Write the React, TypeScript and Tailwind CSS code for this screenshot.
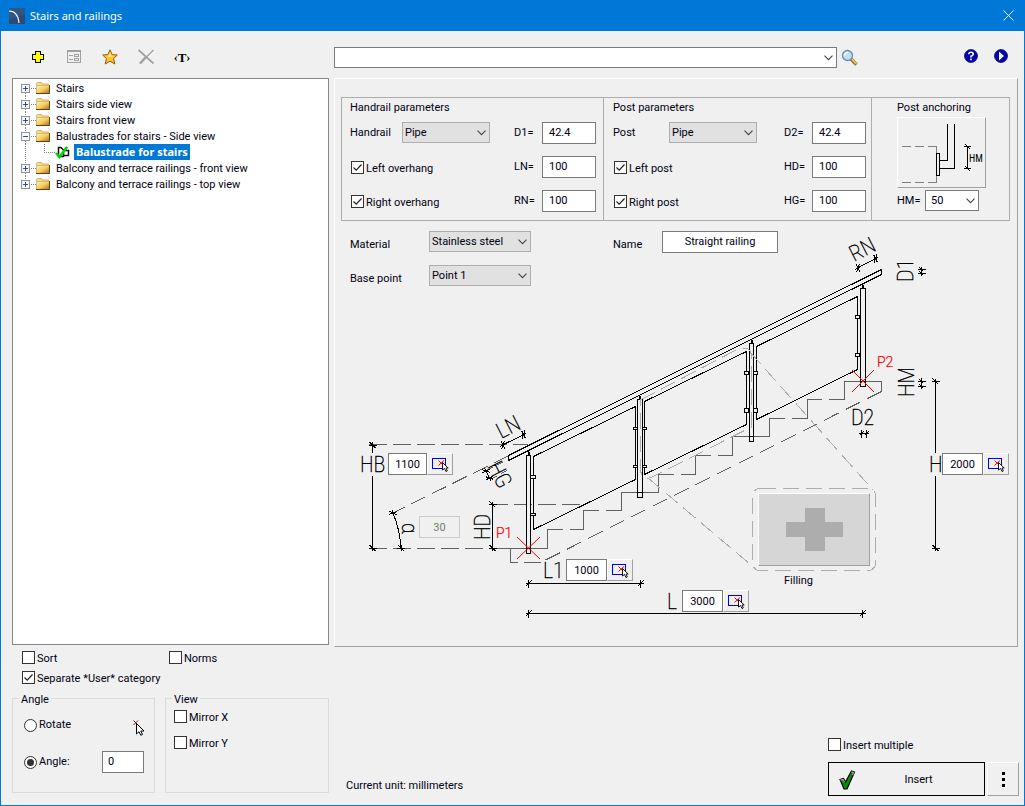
import React from "react";

const cx = (...c: (string | false | undefined)[]) => c.filter(Boolean).join(" ");

function Check({ label, checked, className }: { label: string; checked?: boolean; className?: string }) {
  return (
    <label className={cx("flex items-center gap-0.5", className)}>
      <span className="relative block size-[13px] shrink-0">
        <input
          type="checkbox"
          defaultChecked={checked}
          className="peer block size-[13px] appearance-none border border-[#333333] bg-white"
        />
        <svg
          viewBox="0 0 13 13"
          className="pointer-events-none absolute inset-0 hidden size-[13px] peer-checked:block"
          fill="none"
          stroke="#222"
        >
          <path d="M2.5 6.5 L5.2 9.2 L10.5 3.5" strokeWidth="1.2" />
        </svg>
      </span>
      <span className="pt-0.5 whitespace-nowrap">{label}</span>
    </label>
  );
}

function Picker({ label, options, className, white }: { label: string; options: string[]; className?: string; white?: boolean }) {
  return (
    <span className={cx("relative block h-[21px] shrink-0", className)}>
      <select
        aria-label={label}
        className={cx(
          "block size-full appearance-none border pr-4 text-[11px] leading-none outline-none",
          white ? "border-[#7a7a7a] bg-white pl-[5px]" : "border-[#adadad] bg-[#e1e1e1] pl-[2px]",
        )}
      >
        {options.map((o) => (
          <option key={o}>{o}</option>
        ))}
      </select>
      <svg viewBox="0 0 9 6" className="pointer-events-none absolute top-2 right-1 h-[6px] w-[9px]" fill="none" stroke="#444">
        <path d="M0.5 0.7 L4.5 4.7 L8.5 0.7" strokeWidth="1.1" />
      </svg>
    </span>
  );
}

const box = "block h-[22px] border border-[#7a7a7a] bg-white text-[11px] leading-none outline-none";

function Param({ name, value }: { name: string; value: string }) {
  return (
    <label className="flex items-center">
      <span className="w-7">{name}=</span>
      <input className={cx(box, "w-[54px] px-[6px] pb-0.5")} defaultValue={value} />
    </label>
  );
}

function PickIcon() {
  return (
    <svg viewBox="0 0 18 16" className="h-4 w-[18px]" fill="none">
      <rect x="1.5" y="2.5" width="13" height="10" stroke="#0000f0" shapeRendering="crispEdges" />
      <path d="M7.500 4.500 L12.500 9.500 M13 4.500 L7.500 9.500" stroke="#f00" />
      <path d="M11.500 6.500 V14 L13.500 12.500 L15 15.500 L16.300 15 L15 12 H17.200 Z" fill="#fff" stroke="#000" strokeWidth="0.9" />
    </svg>
  );
}

function Dimension({ label, value, className, narrow }: { label: string; value: string; className: string; narrow?: boolean }) {
  return (
    <div className={cx("absolute flex", className)}>
      <input aria-label={label} className={cx(box, "px-0 text-center", narrow ? "w-[39px]" : "w-[41px]")} defaultValue={value} />
      <button
        aria-label={`Pick ${label}`}
        className="flex h-[22px] w-[26px] items-center justify-center border border-t-white border-r-[#a0a0a0] border-b-[#a0a0a0] border-l-white bg-[#f0f0f0]"
      >
        <PickIcon />
      </button>
    </div>
  );
}

function Folder() {
  return (
    <svg viewBox="0 0 16 14" className="h-[14px] w-4 shrink-0">
      <defs>
        <linearGradient id="folder" x1="0" y1="0" x2="1" y2="1">
          <stop offset="0" stopColor="#fff3c0" />
          <stop offset="0.5" stopColor="#f4cc62" />
          <stop offset="1" stopColor="#b06c08" />
        </linearGradient>
      </defs>
      <path d="M1.500 12 V2.500 L2.500 1.500 H6.500 L7.500 3 H13.500 V12 Z" fill="#f3dc96" stroke="#c9a44c" strokeWidth="0.8" />
      <rect x="1.500" y="4.500" width="13" height="8" fill="url(#folder)" />
      <path d="M1.500 12.500 V4.500 H14.500" fill="none" stroke="#e0bd62" />
      <path d="M14.500 4 V12.500 H1" fill="none" stroke="#5a4312" />
    </svg>
  );
}

function Expander({ open, first, last }: { open?: boolean; first?: boolean; last?: boolean }) {
  return (
    <svg viewBox="0 0 20 16" className="h-4 w-5 shrink-0" fill="none" shapeRendering="crispEdges">
      {!first && <path d="M4.500 0 V4" stroke="#888" strokeDasharray="1 1" />}
      {!last && <path d="M4.500 13 V16" stroke="#888" strokeDasharray="1 1" />}
      <path d="M10 8.500 H15" stroke="#888" strokeDasharray="1 1" />
      <rect x="0.500" y="4.500" width="8" height="8" fill="#fafafa" stroke="#919191" />
      <path d={open ? "M2 8.500 H7" : "M2 8.500 H7 M4.500 6 V11"} stroke="#2b4fa0" />
    </svg>
  );
}

function TreeRow({ label, open, first, last }: { label: string; open?: boolean; first?: boolean; last?: boolean }) {
  return (
    <button className="flex h-4 items-center text-left">
      <Expander open={open} first={first} last={last} />
      <span className="-ml-[6px] flex items-center gap-[5px]">
        <Folder />
        <span className="pt-0.5 whitespace-nowrap">{label}</span>
      </span>
    </button>
  );
}

function Tree() {
  return (
    <div className="flex-1 border border-[#828790] bg-white pt-[1px] pl-2">
      <TreeRow label="Stairs" first />
      <TreeRow label="Stairs side view" />
      <TreeRow label="Stairs front view" />
      <TreeRow label="Balustrades for stairs - Side view" open />
      <button className="flex h-4 items-center text-left">
        <svg viewBox="0 0 50 16" className="h-4 w-[50px] shrink-0" fill="none">
          <path d="M4.500 0 V16 M23.500 0 V8.500 H34" stroke="#888" strokeDasharray="1 1" shapeRendering="crispEdges" />
          <path d="M37.500 3.500 H40 L42.500 6 V12.500 H37.500 Z M42.500 6.500 H47.500 V11.500 H42.500 M44 6 L46 3" stroke="#111" fill="#fff" strokeWidth="1.500" />
          <path d="M35 9 L38.500 13 L46 3" stroke="#00d800" strokeWidth="2.500" />
        </svg>
        <span className="ml-[3px] h-4 bg-[#0078d7] px-0.5 font-['Noto_Sans',sans-serif] text-[11px] leading-4 font-bold whitespace-nowrap text-white">
          Balustrade for stairs
        </span>
      </button>
      <TreeRow label="Balcony and terrace railings - front view" />
      <TreeRow label="Balcony and terrace railings - top view" last />
    </div>
  );
}

function Toolbar() {
  const btn = "flex size-9 items-center justify-center";
  return (
    <div className="flex h-[47px] items-center pt-[5px] pl-2">
      <button aria-label="Add" className={btn}>
        <svg viewBox="0 0 16 16" className="size-4" shapeRendering="crispEdges">
          <path d="M5.500 2.500 H10.500 V5.500 H13.500 V10.500 H10.500 V13.500 H5.500 V10.500 H2.500 V5.500 H5.500 Z" fill="#ffff00" stroke="#000" />
        </svg>
      </button>
      <button aria-label="Properties" className={btn}>
        <svg viewBox="0 0 16 16" className="size-4" fill="none" stroke="#a0a0a0" shapeRendering="crispEdges">
          <path d="M1.500 2 V14 M14.500 2 V14 M1 13.500 H15" />
          <path d="M1 2 H15" strokeWidth="2" />
          <path d="M3 6.500 H7 M3 10.500 H7" />
          <rect x="8.500" y="5.500" width="4" height="2" />
          <rect x="8.500" y="9.500" width="4" height="2" />
        </svg>
      </button>
      <button aria-label="Favourite" className={btn}>
        <svg viewBox="0 0 16 16" className="size-4">
          <path
            d="M8 0.800 L10.200 5.600 L15.300 6 L11.600 9.600 L12.800 15 L8 12.200 L3.200 15 L4.400 9.600 L0.700 6 L5.800 5.600 Z"
            fill="#ffc02a"
            stroke="#8f5f14"
            strokeLinejoin="round"
          />
          <path d="M8 3 L9 6.500 L12 7 L8 8.500 L4.500 7 L7 6.500 Z" fill="#ffe68a" />
        </svg>
      </button>
      <button aria-label="Delete" className={btn}>
        <svg viewBox="0 0 16 16" className="size-4" fill="none">
          <path d="M1.500 2 L16 15 M16 3 L9 9.500" stroke="#fff" />
          <g stroke="#a0a0a0">
            <path d="M0.500 1 L15.500 14.500" strokeWidth="1.700" />
            <path d="M15.500 1 L2 14.500" strokeWidth="1.200" />
            <path d="M7.500 8.500 L2 14.500" strokeWidth="2.500" />
          </g>
        </svg>
      </button>
      <button aria-label="Text" className={cx(btn, "font-['Liberation_Serif',serif] text-[13px] leading-none font-bold text-black")}>
        <span className="text-[12px]">‹</span>
        <span>T</span>
        <span className="text-[12px]">›</span>
      </button>
    </div>
  );
}

function Tick({ x, y, a = 0 }: { x: number; y: number; a?: number }) {
  return <path d="M0 -4 V4 M-3 3 L3 -3 M-3 0 H3" transform={`translate(${x} ${y}) rotate(${a})`} />;
}

function SmallTick({ x, y, a = 0 }: { x: number; y: number; a?: number }) {
  return <path d="M0 -4 V4 M-2 2 L2 -2" transform={`translate(${x} ${y}) rotate(${a})`} />;
}

const stairs = [
  "M493 548.5 H547.5 V529.5 H563 M570 529.5 H583.5 V510.5 H599 M606 510.5 H621.5 V492.5 H658.5 V474.5 H674 M681 474.5 H695.5",
  "V455.5 H711 M718 455.5 H732.5 V436.5 H769.5 V418.5 H785 M792 418.5 H807.5 V399.5 H822 M829 399.5 H844.5 V381.5 H881.5 V391.5",
  "M510.5 548.5 V562.5 H518 M524 562.5 H540.5",
].join(" ");

const clamps: [number, number, number, number][] = [
  [530.5, 475.5, 5, 3], [530.5, 513.5, 5, 2],
  [633.5, 427.5, 4, 2], [633.5, 465.5, 4, 2],
  [642.5, 427.5, 4, 2], [642.5, 465.5, 4, 2],
  [744.5, 371.5, 4, 3], [744.5, 408.5, 4, 4],
  [753.5, 371.5, 4, 3], [753.5, 408.5, 4, 4],
  [855.5, 315.5, 4, 3], [855.5, 353.5, 4, 3],
];

const posts: [number, number, number, number][] = [
  [526.5, 455.5, 548.5, 4],
  [637.5, 399.5, 492.5, 5],
  [749.5, 343.5, 436.5, 4],
  [860.5, 288.5, 381.5, 5],
];

function Drawing() {
  return (
    <svg viewBox="335 221 682 424" className="absolute top-0 left-0 h-[424px] w-[682px]" fill="none" role="img" aria-label="Balustrade side view">
      <g stroke="#606060" shapeRendering="crispEdges">
        <path d={stairs} />
        <path d="M881.500 391.500 L540.500 562.500" strokeDasharray="16 8" />
        <path d="M369 444.500 H528 M369 548.500 H493 M490 504.500 H585" strokeDasharray="18 6" />
        <path d="M508 456 L393 513" strokeDasharray="16 7" />
      </g>
      <g stroke="#000" shapeRendering="crispEdges">
        <path d="M508.500 460.500 V455.500 L881.500 269.500 V274.500 Z" />
        <path d="M533.500 456.500 L635.500 406.500 V479.500 L533.500 529.500 Z" />
        <path d="M644.500 401.500 L746.500 351.500 V424.500 L644.500 474.500 Z" />
        <path d="M756.500 346.500 L857.500 296.500 V369.500 L756.500 419.500 Z" />
        {posts.map(([x, y, b, w]) => (
          <g key={x}>
            <rect x={x} y={y} width={w} height={b - y + 5} fill="#f0f0f0" />
            <path d={`M${x} ${b} h${w} M${x + 2} ${y} v-5 M${x + 3} ${y} v-4`} />
          </g>
        ))}
        {clamps.map(([x, y, w, h]) => (
          <rect key={`${x}-${y}`} x={x} y={y} width={w} height={h} fill="#f0f0f0" />
        ))}
      </g>
      <g stroke="#adadad" strokeDasharray="16 7" shapeRendering="crispEdges">
        <path d="M640.500 400 L736 350 Q742 347 748 349 Q751.500 351 751.500 358 V427 L652 477 Q646 480 642 475 Q640.500 473 640.500 468 Z" />
        <path d="M750 352 L873 490 M648 478 L757 570" />
        <rect x="752.500" y="488.500" width="123" height="82" rx="7" />
      </g>
      <g stroke="#000" shapeRendering="crispEdges">
        <path d="M372.500 444 V453 M372.500 476 V548 M935.500 381 V453 M935.500 476 V548 M492.500 504 V548" />
        <path d="M528 583.500 H641 M528 613.500 H863" />
        <path d="M393 513 Q400 530 401 548" />
        <path d="M502.500 445 L524 434.500 M857.500 268 L876 258.500 M486 471 L490 479" />
        <path d="M487 470 L505 461 M491 479 L508 470" stroke="#606060" strokeDasharray="7 4" />
        <path d="M921.500 267 V276 M921.500 378 V389 M859 433.500 H869" />
        <Tick x={372.500} y={445} a={90} />
        <Tick x={372.500} y={548} a={90} />
        <Tick x={935.500} y={381.500} a={90} />
        <Tick x={935.500} y={548} a={90} />
        <Tick x={492.500} y={504.500} a={90} />
        <Tick x={492.500} y={548} a={90} />
        <Tick x={393} y={513} a={70} />
        <Tick x={401} y={548} a={90} />
        <Tick x={528.500} y={583.500} />
        <Tick x={640.500} y={583.500} />
        <Tick x={528.500} y={613.500} />
        <Tick x={862.500} y={613.500} />
        <Tick x={503} y={445} a={-27} />
        <Tick x={523.500} y={434.500} a={-27} />
        <Tick x={858} y={268} a={-27} />
        <Tick x={875.500} y={258.500} a={-27} />
        <Tick x={486} y={471} a={63} />
        <Tick x={489.500} y={478} a={63} />
        <SmallTick x={921.500} y={269.500} a={90} />
        <SmallTick x={921.500} y={273.500} a={90} />
        <SmallTick x={921.500} y={381.500} a={90} />
        <SmallTick x={921.500} y={386.500} a={90} />
        <SmallTick x={861.500} y={433.500} />
        <SmallTick x={866.500} y={433.500} />
      </g>
      <g stroke="#f00">
        <path d="M517 537 L540 559 M540 537 L517 559 M852 370 L874 392 M874 370 L852 392" />
      </g>
      <g fill="#ff0000" stroke="#ff0000" strokeWidth="0.2" className="font-['Roboto',sans-serif] text-[14px] font-light">
        <text x="496" y="538">P1</text>
        <text x="877" y="367">P2</text>
      </g>
      <g
        fill="#000"
        stroke="#000"
        strokeWidth="0.4"
        className="font-['Roboto_Condensed','Liberation_Sans_Narrow','Roboto',sans-serif] text-[22px] font-thin"
      >
        <text x="360" y="472">HB</text>
        <text x="929" y="472">H</text>
        <text x="543" y="578">L1</text>
        <text x="667" y="609">L</text>
        <text x="851" y="425">D2</text>
        <text transform="translate(490 540) rotate(-90)">HD</text>
        <text transform="translate(913 282) rotate(-90)">D1</text>
        <text transform="translate(914 397) rotate(-90)">HM</text>
        <text transform="translate(501 439) rotate(-27)">LN</text>
        <text transform="translate(854 262) rotate(-27)">RN</text>
        <text transform="translate(487 466) rotate(63)">HG</text>
        <text transform="translate(402 523) rotate(90)">α</text>
      </g>
    </svg>
  );
}

function Anchoring() {
  return (
    <svg viewBox="898 118 86 68" className="h-[68px] w-[86px]" fill="none" shapeRendering="crispEdges">
      <path d="M902 145.500 H936.500 M902 181.500 H936.500" stroke="#808080" strokeDasharray="9 4" />
      <path d="M936.500 145 V182" stroke="#808080" />
      <rect x="936.500" y="152.500" width="3" height="22" stroke="#000" fill="#f0f0f0" />
      <path d="M954.500 123 V167.500 H940 M947.500 123 V159.500 H940" stroke="#000" />
      <path d="M967.500 145 V168 M964 145.500 H971 M964 167.500 H971 M965 143 L970 148 M965 165 L970 170" stroke="#000" />
      <text x="969" y="161" fill="#000" className="font-['Roboto_Condensed','Liberation_Sans_Narrow','Roboto',sans-serif] text-[10px]">
        HM
      </text>
    </svg>
  );
}

function Parameters() {
  const row = "flex h-[22px] items-start";
  return (
    <div className="mt-[18px] mr-[7px] ml-[6px] flex h-[124px] border border-[#adadad]">
      <section className="w-[262px] border-r border-[#adadad] pl-2">
        <h2 className="mt-[3px] h-[13px] leading-[13px]">Handrail parameters</h2>
        <div className="mt-2 flex flex-col gap-3">
          <div className={cx(row, "gap-6")}>
            <div className="flex items-start">
              <span className="w-[52px] pt-1">Handrail</span>
              <Picker label="Handrail" options={["Pipe"]} className="w-[88px]" />
            </div>
            <Param name="D1" value="42.4" />
          </div>
          <div className={cx(row, "gap-6")}>
            <Check label="Left overhang" checked className="h-[22px] w-[140px] pt-px pl-px" />
            <Param name="LN" value="100" />
          </div>
          <div className={cx(row, "gap-6")}>
            <Check label="Right overhang" checked className="h-[22px] w-[140px] pt-px pl-px" />
            <Param name="RN" value="100" />
          </div>
        </div>
      </section>
      <section className="w-[268px] border-r border-[#adadad] pl-[9px]">
        <h2 className="mt-[3px] h-[13px] leading-[13px]">Post parameters</h2>
        <div className="mt-2 flex flex-col gap-3">
          <div className={cx(row, "gap-[27px]")}>
            <div className="flex items-start">
              <span className="w-14 pt-1">Post</span>
              <Picker label="Post" options={["Pipe"]} className="w-[88px]" />
            </div>
            <Param name="D2" value="42.4" />
          </div>
          <div className={cx(row, "gap-[27px]")}>
            <Check label="Left post" checked className="h-[22px] w-36 pt-px pl-px" />
            <Param name="HD" value="100" />
          </div>
          <div className={cx(row, "gap-[27px]")}>
            <Check label="Right post" checked className="h-[22px] w-36 pt-px pl-px" />
            <Param name="HG" value="100" />
          </div>
        </div>
      </section>
      <section className="flex-1 pl-[25px]">
        <h2 className="mt-[3px] h-[13px] leading-[13px]">Post anchoring</h2>
        <button
          aria-label="Post anchoring"
          className="mt-[3px] block h-[71px] w-[89px] border border-t-white border-r-[#a0a0a0] border-b-[#a0a0a0] border-l-white"
        >
          <Anchoring />
        </button>
        <div className="mt-0.5 flex items-center">
          <span className="w-7">HM=</span>
          <Picker label="HM" options={["50"]} className="w-[54px]" white />
        </div>
      </section>
    </div>
  );
}

function Canvas() {
  return (
    <div className="relative h-[424px] pt-[10px] pl-[15px]">
      <Drawing />
      <div className="relative flex flex-col gap-3">
        <div className="flex h-[22px] items-start">
          <span className="w-[79px] pt-[7px]">Material</span>
          <Picker label="Material" options={["Stainless steel"]} className="w-[102px]" />
          <label className="ml-[82px] flex items-start">
            <span className="w-[49px] pt-[7px]">Name</span>
            <input className={cx(box, "w-[116px] px-0 pb-0.5 text-center")} defaultValue="Straight railing" />
          </label>
        </div>
        <div className="flex h-[22px] items-start">
          <span className="w-[79px] pt-[7px]">Base point</span>
          <Picker label="Base point" options={["Point 1"]} className="w-[102px]" />
        </div>
      </div>
      <Dimension label="HB" value="1100" className="top-[232px] left-[53px]" narrow />
      <Dimension label="L1" value="1000" className="top-[338px] left-[231px]" />
      <Dimension label="L" value="3000" className="top-[369px] left-[347px]" />
      <Dimension label="H" value="2000" className="top-[232px] left-[607px]" />
      <input
        aria-label="Slope"
        disabled
        defaultValue="30"
        className="absolute top-[295px] left-[84px] h-[22px] w-[41px] border border-[#cccccc] bg-[#f0f0f0] text-center text-[11px] leading-none text-[#6d7d6d]"
      />
      <button
        aria-labelledby="filling"
        className="absolute top-[272px] left-[423px] flex h-[73px] w-[112px] items-center justify-center border border-t-white border-r-[#a0a0a0] border-b-[#a0a0a0] border-l-white bg-[#d6d6d6]"
      >
        <svg viewBox="0 0 57 43" className="h-[43px] w-[57px]" fill="#adadad">
          <path d="M19 0 H39 V14 H57 V29 H39 V43 H19 V29 H0 V14 H19 Z" />
        </svg>
      </button>
      <span id="filling" className="absolute top-[353px] left-[449px] leading-[14px]">
        Filling
      </span>
    </div>
  );
}

function Radio({ label, checked }: { label: string; checked?: boolean }) {
  return (
    <label className="flex items-center gap-0.5">
      <span className="relative block size-[13px]">
        <input type="radio" name="angle" defaultChecked={checked} className="peer block size-[13px] appearance-none rounded-full border border-[#333] bg-white" />
        <span className="pointer-events-none absolute top-[3px] left-[3px] hidden size-[7px] rounded-full bg-[#333] peer-checked:block" />
      </span>
      <span>{label}</span>
    </label>
  );
}

function Options() {
  return (
    <div className="h-[160px] pt-[6px]">
      <div className="flex h-[13px] pl-[10px]">
        <Check label="Sort" className="w-[147px]" />
        <Check label="Norms" />
      </div>
      <Check label="Separate *User* category" checked className="mt-[7px] h-[13px] pl-[10px]" />
      <div className="mt-[5px] flex items-start gap-[10px]">
        <fieldset className="h-[104px] w-[143px] border border-[#dcdcdc] pl-[11px]">
          <legend className="-ml-[5px] px-0.5 pt-1 leading-[14px]">Angle</legend>
          <div className="mt-2 flex h-5 items-center">
            <Radio label="Rotate" />
            <button aria-label="Pick rotation" className="mr-2 ml-auto flex pt-1">
              <svg viewBox="0 0 14 17" className="h-[17px] w-[14px]" fill="none">
                <path d="M1.500 1.500 L6 6 M6 1.500 L1.500 6" stroke="#600" strokeWidth="0.900" />
                <path d="M4.500 4.500 V15 L7 12.700 L8.800 16.300 L10.500 15.500 L8.800 12 H12 Z" fill="#fff" stroke="#000" />
              </svg>
            </button>
          </div>
          <div className="mt-4 flex items-center justify-between pr-[10px]">
            <Radio label="Angle:" checked />
            <input aria-label="Angle value" className={cx(box, "w-[42px] px-[5px] pb-0.5")} defaultValue="0" />
          </div>
        </fieldset>
        <fieldset className="h-[104px] flex-1 border border-[#dcdcdc] pl-2">
          <legend className="-ml-[2px] px-0.5 pt-1 leading-[14px]">View</legend>
          <Check label="Mirror X" className="mt-[3px] h-[13px]" />
          <Check label="Mirror Y" className="mt-[13px] h-[13px]" />
        </fieldset>
      </div>
    </div>
  );
}

function SearchBar() {
  return (
    <div className="flex h-[47px] items-center pt-[6px]">
      <Picker label="Search" options={[""]} className="w-[503px]" white />
      <button aria-label="Find" className="ml-1">
        <svg viewBox="0 0 18 18" className="size-[18px]">
          <path d="M10 10 L15.500 15.500" stroke="#7a5a20" strokeWidth="3.200" />
          <path d="M10.500 10 L15.500 15" stroke="#f0c060" strokeWidth="1.800" />
          <circle cx="6.500" cy="6.500" r="5" fill="#bfe0f7" stroke="#6b8cae" strokeWidth="1.300" />
          <path d="M3.500 6.500 Q4 3.500 7 3.500" stroke="#fff" strokeWidth="1.500" fill="none" />
        </svg>
      </button>
      <div className="mr-[10px] ml-auto flex gap-4 pb-1">
        <button aria-label="Help">
          <svg viewBox="0 0 14 14" className="size-[14px]">
            <circle cx="7" cy="7" r="6.500" fill="#0000b0" stroke="#000050" strokeWidth="0.700" />
            <path d="M4.800 5.200 Q4.800 3.300 7 3.300 Q9.200 3.300 9.200 5.200 Q9.200 6.300 7 7.300 V8.500 M7 9.500 V11.300" fill="none" stroke="#fff" strokeWidth="1.600" />
          </svg>
        </button>
        <button aria-label="Play">
          <svg viewBox="0 0 14 14" className="size-[14px]">
            <circle cx="7" cy="7" r="6.500" fill="#0000b0" stroke="#000050" strokeWidth="0.700" />
            <path d="M5 2.500 L10 7 L5 11.500 Z" fill="#fff" />
          </svg>
        </button>
      </div>
    </div>
  );
}

function Footer() {
  return (
    <div className="flex h-[158px] items-end justify-between pb-[9px] pl-3">
      <p className="pb-[3px]">Current unit: millimeters</p>
      <div className="-mr-px flex flex-col gap-[11px]">
        <Check label="Insert multiple" className="h-[13px]" />
        <div className="flex gap-0.5">
          <button className="relative flex h-[34px] w-[157px] items-center justify-center border border-black pt-px pl-6">
            <svg viewBox="0 0 18 22" className="absolute left-[9px] h-[22px] w-[18px]">
              <path d="M2 10.500 L5.500 9.500 L7.500 13 L13.500 2 L16.500 3 L9 20 L6 20 Z" fill="#0a8a0a" stroke="#000" strokeWidth="1.200" />
              <path d="M2.500 11 L5 10.500 L6.500 13 M13.500 3 L15.500 3.500 L14.500 6" fill="none" stroke="#999" strokeWidth="1.300" />
            </svg>
            Insert
          </button>
          <button
            aria-label="More"
            className="flex h-[34px] w-8 flex-col items-center justify-center gap-[3px] border border-t-white border-r-[#a0a0a0] border-b-[#a0a0a0] border-l-white"
          >
            <i className="size-[3px] bg-black" />
            <i className="size-[3px] bg-black" />
            <i className="size-[3px] bg-black" />
          </button>
        </div>
      </div>
    </div>
  );
}

export default function App() {
  return (
    <div className="flex min-h-screen flex-col border border-t-0 border-[#0078d7] bg-[#f0f0f0] font-['Roboto','Liberation_Sans',sans-serif] text-[11px] leading-[14px] text-[#000010]">
      <header className="flex h-[31px] items-center bg-[#0078d7] pr-[10px] pl-2 text-white">
        <svg viewBox="0 0 16 16" className="size-4">
          <rect width="16" height="16" fill="#2b4a78" />
          <path d="M0 0 H16 V6 L0 12 Z" fill="#3c5f92" opacity="0.5" />
          <path d="M0 3 Q9 3 10 15" fill="none" stroke="#fff" strokeWidth="1.100" />
        </svg>
        <h1 className="ml-[5px] font-['Noto_Sans',sans-serif] text-[11px]">Stairs and railings</h1>
        <button aria-label="Close" className="ml-auto">
          <svg viewBox="0 0 11 11" className="size-[11px]" stroke="#fff">
            <path d="M0.500 0.500 L10.500 10.500 M10.500 0.500 L0.500 10.500" />
          </svg>
        </button>
      </header>
      <main className="flex flex-1 gap-[5px] pr-[6px] pl-[11px]">
        <div className="flex w-[317px] shrink-0 flex-col">
          <Toolbar />
          <Tree />
          <Options />
        </div>
        <div className="flex flex-1 flex-col">
          <SearchBar />
          <div className="flex-1 border border-t-white border-r-[#a0a0a0] border-b-[#a0a0a0] border-l-white">
            <Parameters />
            <Canvas />
          </div>
          <Footer />
        </div>
      </main>
    </div>
  );
}
